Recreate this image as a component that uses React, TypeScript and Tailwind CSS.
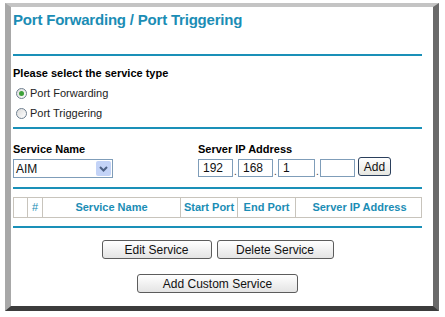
import React, { useState } from "react";

const teal = "text-[#1b8db5]";

function Radio({ checked }: { checked: boolean }) {
  return (
    <span className="w-[11px] h-[11px] rounded-full border border-[#6f7f8f] bg-gradient-to-br from-[#dcdcdc] to-white flex items-center justify-center">
      {checked && <span className="w-[5px] h-[5px] rounded-full bg-[#3da13a]" />}
    </span>
  );
}

function XpButton({ label, width }: { label: string; width: string }) {
  return (
    <button
      type="button"
      className={`${width} h-[19px] rounded-[3px] border border-[#5c5c5c] bg-gradient-to-b from-white to-[#e4e4e4] text-[12px] text-[#111] leading-none`}
    >
      {label}
    </button>
  );
}

function Line() {
  return <div className="h-[2px] bg-[#1a90b8]" />;
}

export default function App() {
  const [type, setType] = useState<"fwd" | "trig">("fwd");

  return (
    <div className="w-[445px] h-[317px] bg-white pt-[3px] pl-[5px] font-['Liberation_Sans',Arial,sans-serif]">
      <div className="w-[434px] h-[308px] border-l-[6px] border-t-[4px] border-r-[6px] border-b-[5px] border-l-[#a8a8a8] border-t-[#c4c4c4] border-r-[#6a6a6a] border-b-[#3c3c3c] bg-white">
        <div className="w-[409px] ml-[2px] flex flex-col">
          {/* title */}
          <div className={`mt-[4px] h-[18px] text-[15px] font-bold leading-[18px] tracking-[-0.2px] ${teal}`}>
            Port Forwarding / Port Triggering
          </div>
          <div className="mt-[25px]">
            <Line />
          </div>

          {/* service type */}
          <div className="mt-[11px] text-[11px] font-bold leading-[13px] text-black">
            Please select the service type
          </div>
          <div className="flex flex-col mt-[3px] text-[11px] text-[#222]">
            <label className="h-[20px] flex items-center gap-[3px] pl-[3px]" onClick={() => setType("fwd")}>
              <Radio checked={type === "fwd"} />
              Port Forwarding
            </label>
            <label className="h-[20px] flex items-center gap-[3px] pl-[3px]" onClick={() => setType("trig")}>
              <Radio checked={type === "trig"} />
              Port Triggering
            </label>
          </div>
          <div className="mt-[4px]">
            <Line />
          </div>

          {/* service name / server ip */}
          <div className="flex mt-[14px]">
            <div className="w-[185px] flex flex-col">
              <div className="text-[11px] font-bold leading-[13px] text-black">Service Name</div>
              <div className="mt-[3px] w-[100px] h-[19px] border border-[#7f9db9] flex items-center justify-between bg-white">
                <span className="pl-[2px] text-[12px] text-[#111]">AIM</span>
                <span className="w-[15px] h-[15px] mr-[1px] rounded-[2px] bg-[#c3d3f7] flex items-center justify-center">
                  <svg width="9" height="6" viewBox="0 0 9 6">
                    <path d="M1 1l3.5 3.5L8 1" stroke="#4d6185" strokeWidth="2" fill="none" />
                  </svg>
                </span>
              </div>
            </div>
            <div className="flex flex-col">
              <div className="text-[11px] font-bold leading-[13px] text-black">Server IP Address</div>
              <div className="flex items-end mt-[1px]">
                {["192", "168", "1", ""].map((v, i) => (
                  <React.Fragment key={i}>
                    {i > 0 && <span className="w-[5px] text-[10px] leading-[10px] text-[#333] text-center">.</span>}
                    <div className={`${i === 2 ? "w-[37px]" : "w-[35px]"} h-[18px] border border-[#7f9db9] bg-white text-[12px] leading-[16px] pl-[4px] text-[#111]`}>
                      {v}
                    </div>
                  </React.Fragment>
                ))}
                <button
                  type="button"
                  className="ml-[3px] w-[33px] h-[19px] mb-[1px] rounded-[3px] border border-[#2b3f5c] bg-gradient-to-b from-white to-[#e6e6e0] text-[12px] leading-none text-[#111]"
                >
                  Add
                </button>
              </div>
            </div>
          </div>
          <div className="mt-[9px]">
            <Line />
          </div>

          {/* table */}
          <div className="mt-[8px] h-[21px] grid grid-cols-[14px_15px_138px_57px_58px_127px] border border-[#c8c4bc] text-[11px] leading-[19px] font-bold">
            <div className="border-r border-[#c8c4bc]" />
            <div className={`border-r border-[#c8c4bc] text-center font-normal ${teal}`}>#</div>
            <div className={`border-r border-[#c8c4bc] text-center ${teal}`}>Service Name</div>
            <div className={`border-r border-[#c8c4bc] text-center ${teal}`}>Start Port</div>
            <div className={`border-r border-[#c8c4bc] text-center ${teal}`}>End Port</div>
            <div className={`text-center ${teal}`}>Server IP Address</div>
          </div>
          <div className="mt-[8px]">
            <Line />
          </div>

          {/* buttons */}
          <div className="flex justify-center gap-[5px] mt-[12px]">
            <XpButton label="Edit Service" width="w-[110px]" />
            <XpButton label="Delete Service" width="w-[117px]" />
          </div>
          <div className="flex justify-center mt-[15px]">
            <XpButton label="Add Custom Service" width="w-[161px]" />
          </div>
        </div>
      </div>
    </div>
  );
}
